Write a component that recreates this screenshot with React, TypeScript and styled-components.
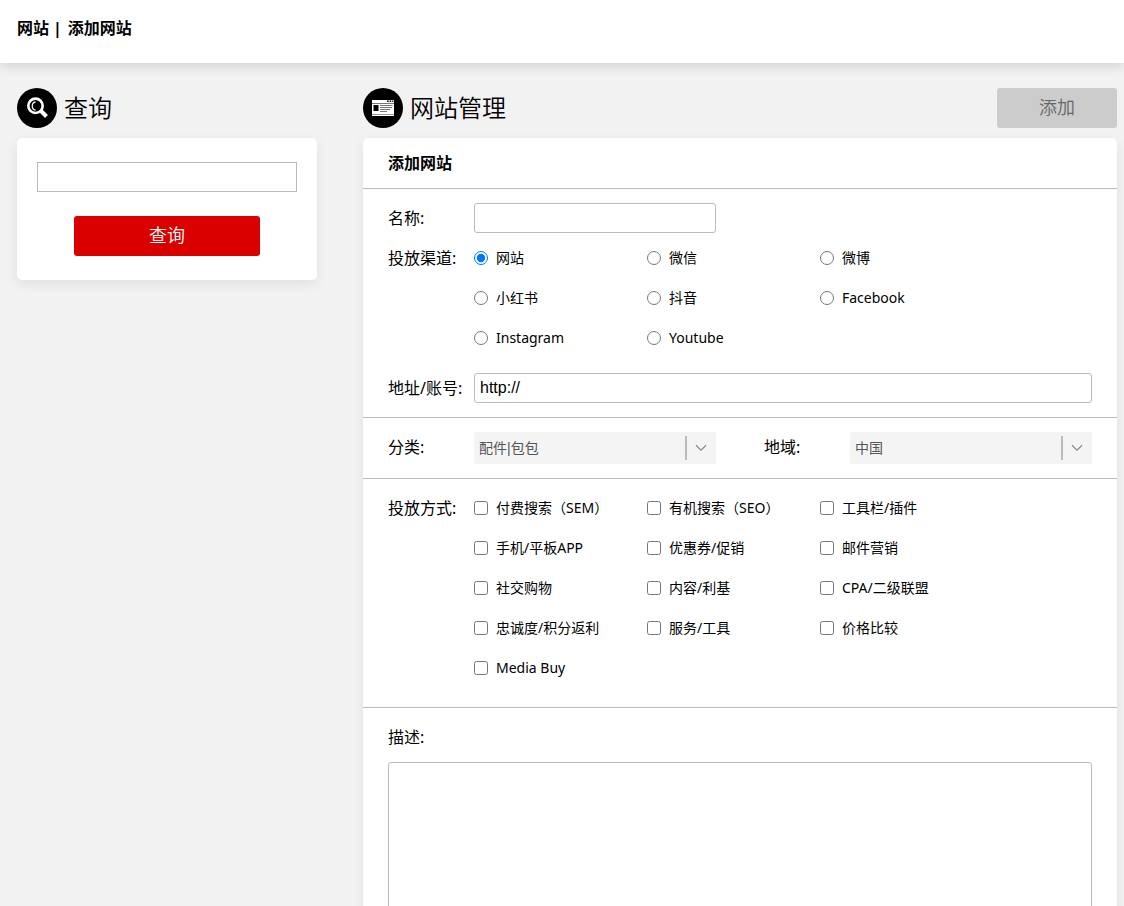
import React from "react";
import styled, { createGlobalStyle, css } from "styled-components";

const GlobalStyle = createGlobalStyle`
  *, *::before, *::after { box-sizing: border-box; }
  body {
    margin: 0;
    background: #f2f2f2;
    color: #000;
    font-family: "Noto Sans", "Noto Sans CJK SC", sans-serif;
    font-size: 16px;
    line-height: 24px;
  }
  input, select, textarea, button {
    font-family: "Liberation Sans", "Noto Sans CJK SC", sans-serif;
  }
`;

const TopBar = styled.header`
  display: flex;
  padding: 16px 17px 23px;
  background: #fff;
  box-shadow: 0 2px 12px rgba(0, 0, 0, 0.16);
`;

const Breadcrumb = styled.nav`
  display: flex;
  gap: 4px;
  font-weight: 700;
`;

const Crumb = styled.a`
  color: inherit;
  text-decoration: none;
`;

const CurrentCrumb = styled.span`
  padding-left: 2px;
`;

const Layout = styled.div`
  display: grid;
  grid-template-columns: 300px minmax(0, 1fr);
  gap: 46px;
  align-items: start;
  padding: 25px 7px 24px 17px;
`;

const PanelHead = styled.div`
  display: flex;
  align-items: center;
  justify-content: space-between;
  height: 40px;
  margin-bottom: 10px;
`;

const Heading = styled.h1`
  display: flex;
  align-items: center;
  gap: 7px;
  margin: 0;
  font-size: 24px;
  font-weight: 350;
  line-height: 40px;
`;

const Card = styled.section`
  background: #fff;
  border-radius: 5px;
  box-shadow: 0 4px 12px rgba(0, 0, 0, 0.08);
`;

const SearchForm = styled.form`
  display: flex;
  flex-direction: column;
  align-items: center;
  gap: 24px;
  padding: 24px 20px;
`;

const Button = styled.button<{ $tone: "primary" | "muted" }>`
  height: 40px;
  padding: 0 0 4px;
  border: 0;
  border-radius: 3px;
  font-size: 18px;
  font-weight: 350;
  ${({ $tone }) =>
    $tone === "primary"
      ? css`width: 186px; background: #db0000; color: #fff;`
      : css`width: 120px; background: #ccc; color: #666;`}
`;

const TextInput = styled.input<{ $square?: boolean }>`
  width: 100%;
  height: 30px;
  padding: 0 5px;
  border: 1px solid #bbb;
  border-radius: ${({ $square }) => ($square ? 0 : 3)}px;
  background: #fff;
  color: #000;
  font-size: 16px;
`;

const CardTitle = styled.h2`
  margin: 0;
  padding: 0 25px;
  font-size: 16px;
  font-weight: 700;
  line-height: 50px;
`;

const FormSection = styled.div<{ $dense?: boolean }>`
  padding: ${({ $dense }) => ($dense ? "9px 25px 19px" : "14px 25px")};
  border-top: 1px solid #bbb;
`;

const Halves = styled.div`
  display: grid;
  grid-template-columns: 1fr 1fr;
  column-gap: 48px;
`;

const fieldRow = css`
  display: grid;
  grid-template-columns: 86px minmax(0, 1fr);
  align-items: start;
`;

const Field = styled.div`
  ${fieldRow}
`;

const Label = styled.label`
  line-height: 30px;
`;

const ChoiceField = styled.div<{ $spaced?: boolean }>`
  ${fieldRow}
  margin: ${({ $spaced }) => ($spaced ? "5px 0 15px" : "0")};
`;

const GroupLabel = styled.span`
  line-height: 40px;
`;

const Choices = styled.div`
  display: grid;
  grid-template-columns: repeat(3, 173px);
  grid-auto-rows: 40px;
`;

const Choice = styled.label`
  display: flex;
  align-items: center;
  gap: 8px;
  font-size: 14px;
  white-space: nowrap;
`;

const ChoiceInput = styled.input`
  flex: none;
  width: 14px;
  height: 14px;
  margin: 0;
`;

const SelectBox = styled.div`
  display: grid;
  grid-template-columns: minmax(0, 1fr) 31px;
  align-items: center;
  height: 32px;
  background: #f4f4f4;
`;

const Select = styled.select`
  grid-area: 1 / 1 / 2 / 3;
  width: 100%;
  height: 32px;
  padding: 0 36px 0 5px;
  border: 0;
  background: transparent;
  color: #555;
  font-size: 14px;
  appearance: none;
`;

const SelectMark = styled.span`
  display: flex;
  grid-area: 1 / 2 / 2 / 3;
  align-items: center;
  justify-content: center;
  height: 24px;
  padding-right: 1px;
  border-left: 2px solid #bbb;
  pointer-events: none;
`;

const Description = styled.textarea`
  display: block;
  width: 100%;
  height: 200px;
  margin-top: 10px;
  padding: 5px;
  border: 1px solid #bbb;
  border-radius: 3px;
  font-size: 16px;
  resize: none;
`;

const SearchIcon = () => (
  <svg width="40" height="40" viewBox="0 0 40 40" aria-hidden="true">
    <circle cx="20" cy="20" r="20" />
    <circle cx="18.5" cy="17.8" r="7.2" fill="none" stroke="#fff" strokeWidth="2.6" />
    <path d="M24 23l5.500 5.500" stroke="#fff" strokeWidth="4" />
    <path d="M18.600 13.800a4.300 4.300 0 0 0 0 8.400" fill="none" stroke="#fff" strokeWidth="1.200" />
  </svg>
);

const SiteIcon = () => (
  <svg width="40" height="40" viewBox="0 0 40 40" aria-hidden="true">
    <circle cx="20" cy="20" r="20" />
    <path d="M9 12h22v16H9z" fill="#fff" />
    <path d="M9 15h22v1H9z" fill="#777" />
    <path d="M24 12.500h1.600v1.500H24zM26.600 12.500h1.600v1.500h-1.600zM29.200 12.500h1.200v1.500h-1.200z" />
    <path d="M10.500 17h5v6h-5z" />
    <path d="M17 17.500h12.500M17 19.500h12M17 21.500h10M17 23.500h7" stroke="#777" />
    <path d="M9 26.500h22" stroke="#999" />
  </svg>
);

const Chevron = () => (
  <svg width="12" height="8" viewBox="0 0 12 8" fill="none" stroke="#888" aria-hidden="true">
    <path d="M1 1.300l5 4.900 5-4.900" strokeWidth="1.200" />
  </svg>
);

const channels = ["网站", "微信", "微博", "小红书", "抖音", "Facebook", "Instagram", "Youtube"];

const methods = [
  "付费搜索（SEM）", "有机搜索（SEO）", "工具栏/插件",
  "手机/平板APP", "优惠券/促销", "邮件营销",
  "社交购物", "内容/利基", "CPA/二级联盟",
  "忠诚度/积分返利", "服务/工具", "价格比较",
  "Media Buy",
];

function SelectField({ id, label, option }: { id: string; label: string; option: string }) {
  return (
    <Field>
      <Label htmlFor={id}>{label}</Label>
      <SelectBox>
        <Select id={id}>
          <option>{option}</option>
        </Select>
        <SelectMark><Chevron /></SelectMark>
      </SelectBox>
    </Field>
  );
}

export default function App() {
  return (
    <>
      <GlobalStyle />
      <TopBar>
        <Breadcrumb>
          <Crumb href="#">网站</Crumb>
          <span>|</span>
          <CurrentCrumb>添加网站</CurrentCrumb>
        </Breadcrumb>
      </TopBar>
      <Layout>
        <aside>
          <PanelHead>
            <Heading><SearchIcon />查询</Heading>
          </PanelHead>
          <Card>
            <SearchForm onSubmit={(e) => e.preventDefault()}>
              <TextInput $square aria-label="查询" />
              <Button $tone="primary" type="submit">查询</Button>
            </SearchForm>
          </Card>
        </aside>
        <main>
          <PanelHead>
            <Heading><SiteIcon />网站管理</Heading>
            <Button $tone="muted" type="button">添加</Button>
          </PanelHead>
          <Card>
            <CardTitle>添加网站</CardTitle>
            <FormSection>
              <Halves>
                <Field>
                  <Label htmlFor="name">名称:</Label>
                  <TextInput id="name" />
                </Field>
              </Halves>
              <ChoiceField $spaced role="radiogroup" aria-labelledby="channel-label">
                <GroupLabel id="channel-label">投放渠道:</GroupLabel>
                <Choices>
                  {channels.map((name, i) => (
                    <Choice key={name}>
                      <ChoiceInput type="radio" name="channel" defaultChecked={i === 0} />
                      {name}
                    </Choice>
                  ))}
                </Choices>
              </ChoiceField>
              <Field>
                <Label htmlFor="address">地址/账号:</Label>
                <TextInput id="address" defaultValue="http://" />
              </Field>
            </FormSection>
            <FormSection>
              <Halves>
                <SelectField id="category" label="分类:" option="配件|包包" />
                <SelectField id="region" label="地域:" option="中国" />
              </Halves>
            </FormSection>
            <FormSection $dense>
              <ChoiceField role="group" aria-labelledby="method-label">
                <GroupLabel id="method-label">投放方式:</GroupLabel>
                <Choices>
                  {methods.map((name) => (
                    <Choice key={name}>
                      <ChoiceInput type="checkbox" />
                      {name}
                    </Choice>
                  ))}
                </Choices>
              </ChoiceField>
            </FormSection>
            <FormSection>
              <Label htmlFor="description">描述:</Label>
              <Description id="description" />
            </FormSection>
          </Card>
        </main>
      </Layout>
    </>
  );
}
